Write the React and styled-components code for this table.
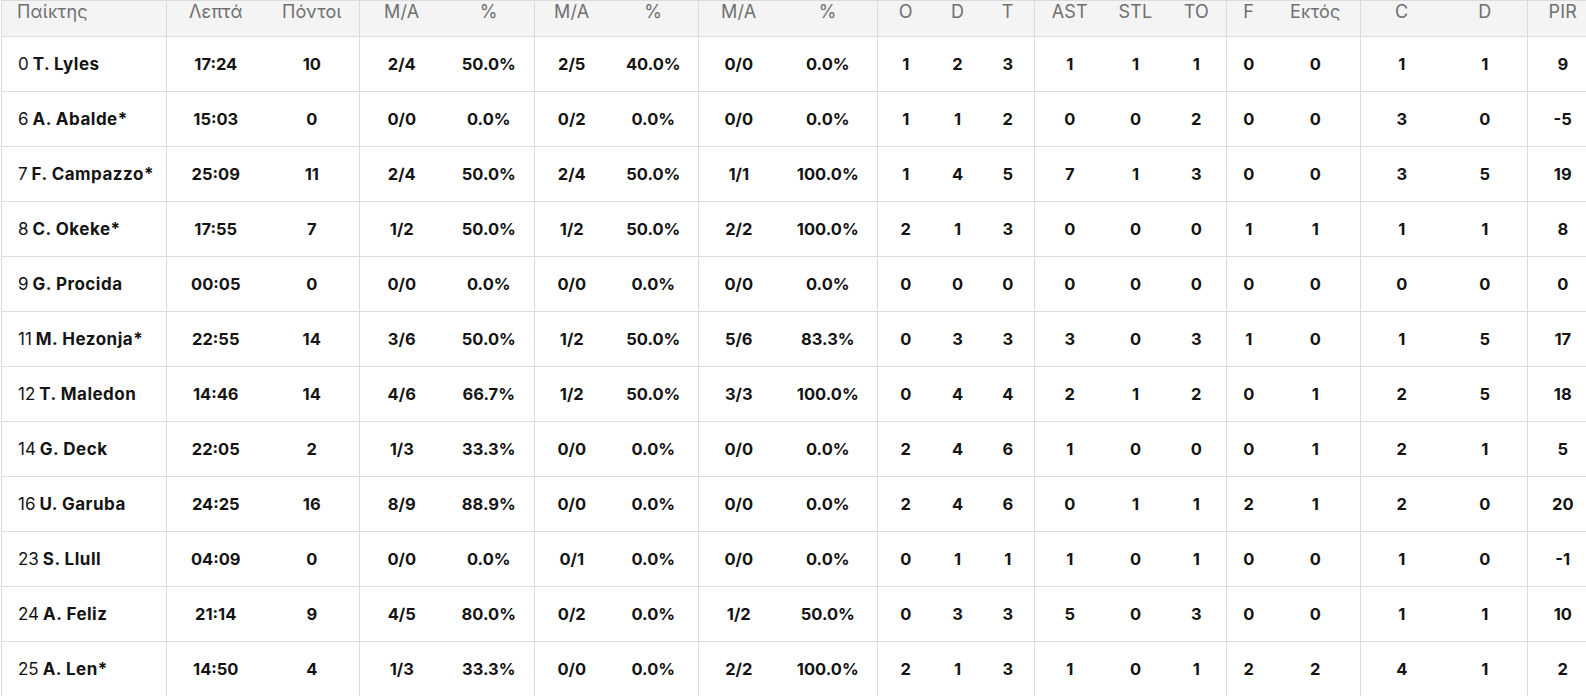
import React from 'react';
import styled, { createGlobalStyle } from 'styled-components';

const GlobalStyle = createGlobalStyle`
  html, body {
    margin: 0;
    padding: 0;
    background: #fff;
    overflow: hidden;
  }
  body {
    font-family: Inter, "Noto Sans", sans-serif;
    color: #141414;
  }
`;

const Wrapper = styled.div`
  width: 1586px;
  height: 696px;
  overflow: hidden;
  padding-left: 1px;
  box-sizing: border-box;
`;

const Table = styled.table`
  border-collapse: collapse;
  table-layout: fixed;
  width: 1596px;
  border-left: 1px solid #dcdcdc;
`;

const HeadRow = styled.tr`
  height: 36px;
  background: #f4f4f4;
  border-top: 1px solid #dcdcdc;
`;

const Th = styled.th`
  padding: 0 0 15px;
  font-weight: 400;
  font-size: 18px;
  line-height: 19px;
  color: #707070;
  letter-spacing: 0.2px;
  text-align: ${({ $left }) => ($left ? 'left' : 'center')};
  padding-left: ${({ $left }) => ($left ? '15px' : '0')};
  border-bottom: 1px solid #dcdcdc;
  border-right: ${({ $end }) => ($end ? '1px solid #dcdcdc' : 'none')};
  white-space: nowrap;
`;

const Row = styled.tr`
  height: 55px;
`;

const Td = styled.td`
  padding: 0;
  font-size: 16.5px;
  font-weight: 700;
  text-align: ${({ $left }) => ($left ? 'left' : 'center')};
  padding-left: ${({ $left }) => ($left ? '16px' : '0')};
  border-bottom: 1px solid #dcdcdc;
  border-right: ${({ $end }) => ($end ? '1px solid #dcdcdc' : 'none')};
  white-space: nowrap;
`;

const Num = styled.span`
  font-weight: 400;
  font-size: 17px;
`;

const Name = styled.span`
  font-size: 17px;
  letter-spacing: 0.5px;
`;

const columns = [
  { label: 'Παίκτης', width: 165, left: true, end: true },
  { label: 'Λεπτά', width: 98 },
  { label: 'Πόντοι', width: 95, end: true },
  { label: 'M/A', width: 84 },
  { label: '%', width: 91, end: true },
  { label: 'M/A', width: 74 },
  { label: '%', width: 90, end: true },
  { label: 'M/A', width: 80 },
  { label: '%', width: 99, end: true },
  { label: 'O', width: 56 },
  { label: 'D', width: 48 },
  { label: 'T', width: 53, end: true },
  { label: 'AST', width: 70 },
  { label: 'STL', width: 62 },
  { label: 'TO', width: 60, end: true },
  { label: 'F', width: 44 },
  { label: 'Εκτός', width: 90, end: true },
  { label: 'C', width: 82 },
  { label: 'D', width: 85, end: true },
  { label: 'PIR', width: 70 },
];

const players = [
  ['0', 'T. Lyles', '17:24', '10', '2/4', '50.0%', '2/5', '40.0%', '0/0', '0.0%', '1', '2', '3', '1', '1', '1', '0', '0', '1', '1', '9'],
  ['6', 'A. Abalde*', '15:03', '0', '0/0', '0.0%', '0/2', '0.0%', '0/0', '0.0%', '1', '1', '2', '0', '0', '2', '0', '0', '3', '0', '-5'],
  ['7', 'F. Campazzo*', '25:09', '11', '2/4', '50.0%', '2/4', '50.0%', '1/1', '100.0%', '1', '4', '5', '7', '1', '3', '0', '0', '3', '5', '19'],
  ['8', 'C. Okeke*', '17:55', '7', '1/2', '50.0%', '1/2', '50.0%', '2/2', '100.0%', '2', '1', '3', '0', '0', '0', '1', '1', '1', '1', '8'],
  ['9', 'G. Procida', '00:05', '0', '0/0', '0.0%', '0/0', '0.0%', '0/0', '0.0%', '0', '0', '0', '0', '0', '0', '0', '0', '0', '0', '0'],
  ['11', 'M. Hezonja*', '22:55', '14', '3/6', '50.0%', '1/2', '50.0%', '5/6', '83.3%', '0', '3', '3', '3', '0', '3', '1', '0', '1', '5', '17'],
  ['12', 'T. Maledon', '14:46', '14', '4/6', '66.7%', '1/2', '50.0%', '3/3', '100.0%', '0', '4', '4', '2', '1', '2', '0', '1', '2', '5', '18'],
  ['14', 'G. Deck', '22:05', '2', '1/3', '33.3%', '0/0', '0.0%', '0/0', '0.0%', '2', '4', '6', '1', '0', '0', '0', '1', '2', '1', '5'],
  ['16', 'U. Garuba', '24:25', '16', '8/9', '88.9%', '0/0', '0.0%', '0/0', '0.0%', '2', '4', '6', '0', '1', '1', '2', '1', '2', '0', '20'],
  ['23', 'S. Llull', '04:09', '0', '0/0', '0.0%', '0/1', '0.0%', '0/0', '0.0%', '0', '1', '1', '1', '0', '1', '0', '0', '1', '0', '-1'],
  ['24', 'A. Feliz', '21:14', '9', '4/5', '80.0%', '0/2', '0.0%', '1/2', '50.0%', '0', '3', '3', '5', '0', '3', '0', '0', '1', '1', '10'],
  ['25', 'A. Len*', '14:50', '4', '1/3', '33.3%', '0/0', '0.0%', '2/2', '100.0%', '2', '1', '3', '1', '0', '1', '2', '2', '4', '1', '2'],
];

export default function App() {
  return (
    <Wrapper>
      <GlobalStyle />
      <Table>
        <colgroup>
          {columns.map((c, i) => (
            <col key={i} style={{ width: c.width }} />
          ))}
        </colgroup>
        <thead>
          <HeadRow>
            {columns.map((c, i) => (
              <Th key={i} $left={c.left} $end={c.end}>
                {c.label}
              </Th>
            ))}
          </HeadRow>
        </thead>
        <tbody>
          {players.map(([no, name, ...stats]) => (
            <Row key={no}>
              <Td $left $end>
                <Num>{no}</Num> <Name>{name}</Name>
              </Td>
              {stats.map((v, i) => (
                <Td key={i} $end={columns[i + 1].end}>
                  {v}
                </Td>
              ))}
            </Row>
          ))}
        </tbody>
      </Table>
    </Wrapper>
  );
}
